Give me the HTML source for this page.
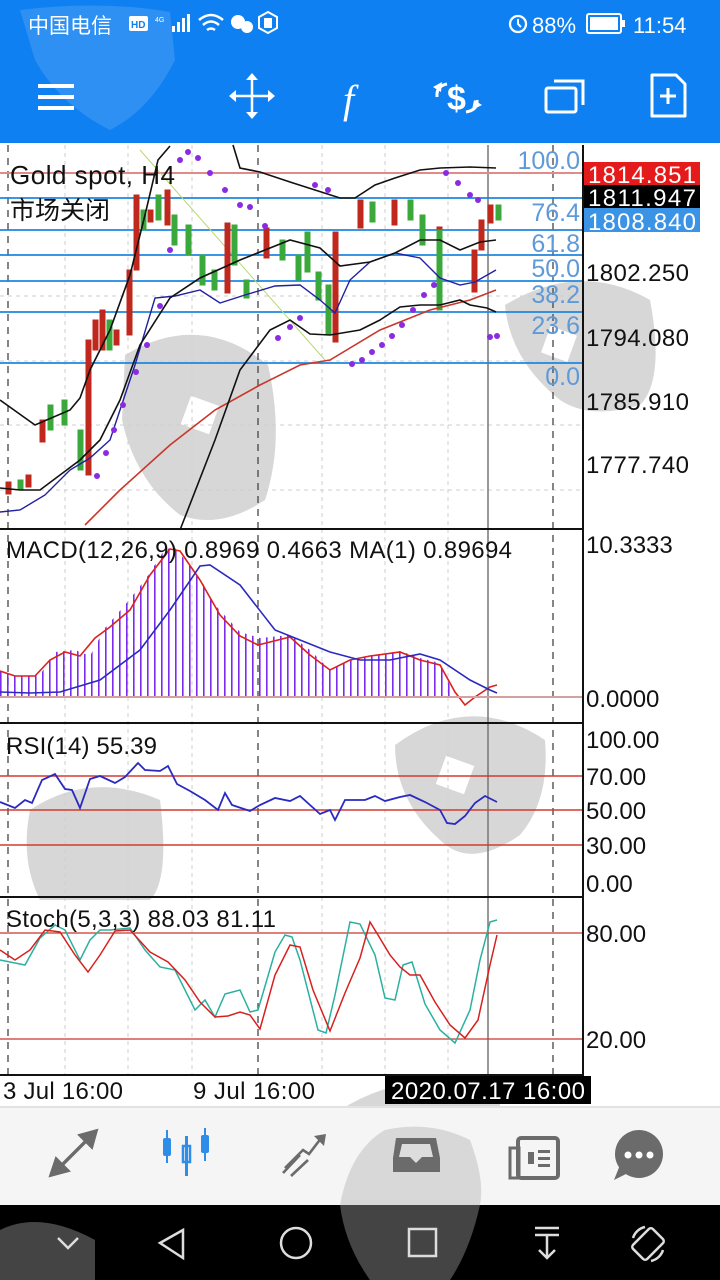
<!DOCTYPE html>
<html><head><meta charset="utf-8"><style>
*{margin:0;padding:0}
body{width:720px;height:1280px;overflow:hidden;background:#fff;font-family:"Liberation Sans","Noto Sans CJK SC",sans-serif;position:relative}
.top{position:absolute;left:0;top:0;width:720px;height:143px;background:#0f80f2}
</style></head><body>
<div class="top"></div>
<svg width="720" height="1280" style="position:absolute;left:0;top:0" xmlns="http://www.w3.org/2000/svg">
<defs>
<pattern id="hist" width="7" height="10" patternUnits="userSpaceOnUse"><rect x="0" y="0" width="1.6" height="10" fill="#7b2bf0"/></pattern>
</defs>
<path d="M20 10 Q100 0 170 12 L175 60 Q150 110 110 130 Q60 105 35 60 Z" fill="#fff" opacity="0.13"/>
<text x="28" y="33" font-size="21" fill="#fff" font-family="Liberation Sans,Noto Sans CJK SC,sans-serif">中国电信</text>
<rect x="129" y="16" width="19" height="15" rx="2" fill="#fff"/><text x="131" y="28" font-size="10" fill="#0f80f2" font-weight="bold">HD</text>
<text x="155" y="22" font-size="7" fill="#fff">4G</text>
<rect x="172" y="26" width="3" height="6" fill="#fff"/><rect x="177" y="22" width="3" height="10" fill="#fff"/><rect x="182" y="18" width="3" height="14" fill="#fff"/><rect x="187" y="14" width="3" height="18" fill="#fff"/>
<path d="M199 20 Q211 10 223 20 M203 25 Q211 18 219 25 M207 30 Q211 27 215 30" stroke="#fff" stroke-width="2.5" fill="none"/>
<circle cx="238" cy="22" r="7" fill="#fff"/><circle cx="247" cy="27" r="6" fill="#fff"/>
<path d="M268 12 L277 17 L277 28 L268 33 L259 28 L259 17 Z" stroke="#fff" stroke-width="2" fill="none"/><rect x="264" y="18" width="8" height="10" fill="#fff"/>
<circle cx="518" cy="24" r="8" stroke="#fff" stroke-width="2.3" fill="none"/><path d="M518 19 V24 L521 27" stroke="#fff" stroke-width="2" fill="none"/>
<text x="532" y="33" font-size="22" fill="#fff">88%</text>
<rect x="587" y="14" width="34" height="19" rx="2" stroke="#fff" stroke-width="2" fill="none"/><rect x="590" y="17" width="28" height="13" fill="#fff"/><rect x="622" y="20" width="3" height="7" fill="#fff"/>
<text x="633" y="33" font-size="22" fill="#fff">11:54</text>
<rect x="38" y="84" width="36" height="4" fill="#fff"/><rect x="38" y="95" width="36" height="4" fill="#fff"/><rect x="38" y="106" width="36" height="4" fill="#fff"/>
<path d="M231 96 H273 M252 75 V117" stroke="#fff" stroke-width="2.5"/>
<path d="M229 96 L236 90 V102 Z M275 96 L268 90 V102 Z M252 73 L246 80 H258 Z M252 119 L246 112 H258 Z" fill="#fff"/>
<text x="343" y="113" font-size="40" font-style="italic" fill="#fff" font-family="Liberation Serif,serif">f</text>
<text x="447" y="110" font-size="34" fill="#fff" font-weight="bold">$</text>
<path d="M447 84 Q436 86 437 97 M477 100 Q478 110 466 112" stroke="#fff" stroke-width="3" fill="none"/>
<path d="M433 87 L442 82 L441 92 Z M482 105 L474 100 L472 110 Z" fill="#fff"/>
<rect x="546" y="88" width="30" height="24" rx="2" stroke="#fff" stroke-width="3" fill="none"/><path d="M554 81 H583 V105" stroke="#fff" stroke-width="3" fill="none"/>
<path d="M652 75 H676 L685 84 V116 H652 Z" stroke="#fff" stroke-width="3" fill="none" stroke-linejoin="round"/><path d="M668 88 V104 M660 96 H676" stroke="#fff" stroke-width="3"/>

<g fill="#9a9a9a" opacity="0.4">
<path d="M125 355 Q200 310 268 365 Q285 440 265 500 Q220 530 180 515 Q135 480 122 420 Z"/>
<path d="M505 305 Q580 260 650 300 Q665 380 640 405 Q590 420 560 400 Q510 360 505 305 Z"/>
<path d="M395 745 Q470 690 545 740 Q550 800 520 835 Q470 870 440 840 Q395 800 395 745 Z"/>
<path d="M30 810 Q90 770 160 800 Q170 880 150 900 L40 900 Q20 860 30 810 Z"/>
<path d="M340 1110 Q420 1060 500 1100 Q500 1200 470 1280 L370 1280 Q335 1200 340 1110 Z"/>
</g>
<g fill="#fff">
<rect x="185" y="400" width="30" height="30" transform="rotate(20 200 415)"/>
<rect x="545" y="330" width="28" height="28" transform="rotate(20 559 344)"/>
<rect x="440" y="760" width="30" height="30" transform="rotate(20 455 775)"/>
</g>

<g stroke="#cfcfcf" stroke-dasharray="4 4" stroke-width="1">
<line x1="65" y1="145" x2="65" y2="1075"/><line x1="128" y1="145" x2="128" y2="1075"/><line x1="192" y1="145" x2="192" y2="1075"/><line x1="322" y1="145" x2="322" y2="1075"/><line x1="385" y1="145" x2="385" y2="1075"/><line x1="448" y1="145" x2="448" y2="1075"/>
<line x1="0" y1="230" x2="582" y2="230"/><line x1="0" y1="296" x2="582" y2="296"/><line x1="0" y1="361" x2="582" y2="361"/><line x1="0" y1="425" x2="582" y2="425"/><line x1="0" y1="490" x2="582" y2="490"/>
</g>
<g stroke="#444" stroke-dasharray="7 6" stroke-width="1.3">
<line x1="8" y1="145" x2="8" y2="1075"/><line x1="258" y1="145" x2="258" y2="1075"/><line x1="553" y1="145" x2="553" y2="1075"/>
</g>
<line x1="488" y1="145" x2="488" y2="1075" stroke="#777" stroke-width="1.5"/>

<line x1="0" y1="173" x2="582" y2="173" stroke="#e08a8a" stroke-width="2"/>
<g stroke="#1e86e0" stroke-width="1.8">
<line x1="0" y1="198" x2="582" y2="198"/><line x1="0" y1="230" x2="582" y2="230"/><line x1="0" y1="255" x2="582" y2="255"/><line x1="0" y1="281" x2="582" y2="281"/><line x1="0" y1="312" x2="582" y2="312"/><line x1="0" y1="363" x2="582" y2="363"/>
</g>
<line x1="140" y1="150" x2="325" y2="360" stroke="#b8d878" stroke-width="1"/>
<g stroke-width="1">
<g stroke="#c0281e" fill="#c0281e">
<rect x="6" y="482" width="5" height="12"/><rect x="26" y="475" width="5" height="12"/><rect x="40" y="420" width="5" height="22"/><rect x="86" y="340" width="5" height="135"/><rect x="93" y="320" width="5" height="30"/><rect x="100" y="310" width="5" height="40"/><rect x="114" y="330" width="5" height="15"/><rect x="127" y="270" width="5" height="65"/><rect x="134" y="195" width="5" height="75"/><rect x="148" y="210" width="5" height="12"/><rect x="165" y="190" width="5" height="35"/><rect x="225" y="223" width="5" height="70"/><rect x="264" y="228" width="5" height="30"/><rect x="333" y="232" width="5" height="110"/><rect x="358" y="200" width="5" height="28"/><rect x="392" y="200" width="5" height="25"/><rect x="437" y="227" width="5" height="23"/><rect x="472" y="250" width="5" height="42"/><rect x="479" y="220" width="5" height="30"/><rect x="488" y="205" width="5" height="18"/>
</g>
<g stroke="#3aa83a" fill="#3aa83a">
<rect x="18" y="480" width="5" height="10"/><rect x="48" y="405" width="5" height="25"/><rect x="62" y="400" width="5" height="25"/><rect x="78" y="430" width="5" height="40"/><rect x="107" y="320" width="5" height="30"/><rect x="141" y="210" width="5" height="20"/><rect x="156" y="195" width="5" height="25"/><rect x="172" y="215" width="5" height="30"/><rect x="186" y="225" width="5" height="30"/><rect x="200" y="255" width="5" height="30"/><rect x="212" y="270" width="5" height="20"/><rect x="232" y="225" width="5" height="40"/><rect x="244" y="280" width="5" height="18"/><rect x="280" y="240" width="5" height="20"/><rect x="296" y="255" width="5" height="25"/><rect x="305" y="232" width="5" height="40"/><rect x="316" y="272" width="5" height="28"/><rect x="326" y="285" width="5" height="50"/><rect x="370" y="202" width="5" height="20"/><rect x="408" y="200" width="5" height="20"/><rect x="420" y="215" width="5" height="30"/><rect x="437" y="230" width="5" height="80"/><rect x="496" y="205" width="5" height="15"/>
</g>
</g>
<polyline fill="none" stroke="#c8372c" stroke-width="1.6" points="85,525 120,490 170,445 215,410 260,385 300,365 330,360 380,330 430,310 470,300 496,290"/>
<polyline fill="none" stroke="#2020a0" stroke-width="1.4" points="0,512 20,510 45,495 70,470 90,458 110,440 135,365 155,298 175,296 200,290 220,303 245,295 275,286 300,285 320,300 335,313 350,280 370,262 395,253 420,258 440,278 460,285 475,282 496,270"/>
<polyline fill="none" stroke="#111" stroke-width="1.6" points="0,400 35,425 70,410 80,398 90,370 110,330 130,275 145,215 158,160 170,146"/>
<polyline fill="none" stroke="#111" stroke-width="1.6" points="0,488 20,490 40,490 60,475 80,460 100,440 120,400 140,345 170,298 200,278 240,260 270,248 290,240 320,248 340,266 370,262 395,253 420,240 440,240 460,250 480,242 496,240"/>
<polyline fill="none" stroke="#111" stroke-width="1.6" points="180,530 215,440 240,370 270,330 290,320 310,334 330,335 360,330 380,320 400,307 420,305 440,305 460,300 470,305 487,308 496,312"/>
<polyline fill="none" stroke="#111" stroke-width="1.6" points="233,145 240,168 260,172 290,182 315,190 340,198 355,198 375,185 395,178 420,170 440,168 470,167 496,168"/>
<g fill="#8a2be2">
<circle cx="97" cy="476" r="3"/><circle cx="106" cy="453" r="3"/><circle cx="114" cy="430" r="3"/><circle cx="123" cy="405" r="3"/><circle cx="136" cy="372" r="3"/><circle cx="147" cy="345" r="3"/><circle cx="160" cy="306" r="3"/><circle cx="170" cy="250" r="3"/><circle cx="180" cy="160" r="3"/><circle cx="188" cy="152" r="3"/><circle cx="198" cy="158" r="3"/><circle cx="210" cy="173" r="3"/><circle cx="225" cy="190" r="3"/><circle cx="240" cy="205" r="3"/><circle cx="250" cy="207" r="3"/><circle cx="265" cy="226" r="3"/><circle cx="278" cy="338" r="3"/><circle cx="290" cy="327" r="3"/><circle cx="300" cy="318" r="3"/><circle cx="315" cy="185" r="3"/><circle cx="328" cy="190" r="3"/><circle cx="352" cy="364" r="3"/><circle cx="362" cy="360" r="3"/><circle cx="372" cy="352" r="3"/><circle cx="382" cy="345" r="3"/><circle cx="392" cy="336" r="3"/><circle cx="402" cy="325" r="3"/><circle cx="413" cy="310" r="3"/><circle cx="424" cy="295" r="3"/><circle cx="434" cy="285" r="3"/><circle cx="446" cy="173" r="3"/><circle cx="458" cy="183" r="3"/><circle cx="470" cy="195" r="3"/><circle cx="478" cy="200" r="3"/><circle cx="490" cy="337" r="3"/><circle cx="497" cy="336" r="3"/>
</g>
<text x="10" y="184" font-size="26" fill="#111" textLength="165">Gold spot, H4</text>
<text x="10" y="219" font-size="25" fill="#111" font-family="Liberation Sans,Noto Sans CJK SC,sans-serif">市场关闭</text>
<g font-size="25" fill="#5f9ad8" text-anchor="end">
<text x="580" y="169">100.0</text><text x="580" y="221">76.4</text><text x="580" y="252">61.8</text><text x="580" y="277">50.0</text><text x="580" y="303">38.2</text><text x="580" y="334">23.6</text><text x="580" y="385">0.0</text>
</g>

<polygon fill="url(#hist)" points="0,697 0,671 15,676 40,675 55,652 75,650 90,656 105,628 125,605 145,580 165,549 175,548 200,578 215,605 240,632 260,638 290,635 310,650 330,670 350,660 370,656 400,651 420,658 440,663 455,697"/>
<polyline fill="none" stroke="#dd2020" stroke-width="1.6" points="0,671 15,676 35,676 50,660 65,652 80,656 95,638 110,627 130,610 150,575 170,549 180,551 200,580 220,615 240,636 258,645 290,637 310,655 330,670 350,660 370,656 400,652 420,660 440,665 455,692 465,705 475,697 490,687 497,685"/>
<polyline fill="none" stroke="#2a2ac0" stroke-width="1.6" points="0,692 30,693 60,692 100,680 140,650 170,610 200,566 210,565 240,585 275,630 300,640 330,652 360,660 390,660 420,654 440,660 470,680 490,690 497,693"/>
<line x1="0" y1="697" x2="582" y2="697" stroke="#d6a0a0" stroke-width="2"/>
<text x="6" y="558" font-size="24" fill="#111" textLength="506">MACD(12,26,9) 0.8969 0.4663 MA(1) 0.89694</text>

<g stroke="#d33a30" stroke-width="1.4"><line x1="0" y1="776" x2="582" y2="776"/><line x1="0" y1="810" x2="582" y2="810"/><line x1="0" y1="845" x2="582" y2="845"/></g>
<polyline fill="none" stroke="#2a2ac0" stroke-width="1.8" points="0,802 15,808 25,800 32,803 42,780 55,774 65,789 72,790 80,808 90,779 100,776 115,783 125,777 138,763 145,770 160,771 168,766 177,784 190,791 205,800 218,810 225,793 232,805 250,811 260,805 275,798 290,801 300,796 310,805 320,814 330,810 335,820 345,800 365,800 375,796 385,801 400,797 410,795 425,802 440,810 447,823 455,824 465,816 475,803 485,796 497,802"/>
<text x="6" y="754" font-size="24" fill="#111" textLength="151">RSI(14) 55.39</text>

<g stroke="#c8372c" stroke-width="1.2"><line x1="0" y1="933" x2="582" y2="933"/><line x1="0" y1="1039" x2="582" y2="1039"/></g>
<polyline fill="none" stroke="#2bb0a0" stroke-width="1.5" points="0,960 10,962 25,965 40,938 55,925 65,930 80,960 90,940 100,930 110,930 130,928 145,950 160,967 175,970 195,1010 205,1000 215,1017 225,994 240,990 250,1012 258,1010 275,952 285,935 292,937 300,960 318,1030 326,1033 335,995 350,922 360,924 375,955 385,998 395,1000 403,965 412,962 425,1004 440,1030 455,1043 470,1010 480,960 490,922 497,920"/>
<polyline fill="none" stroke="#d82020" stroke-width="1.5" points="0,950 15,960 30,950 45,930 60,932 75,955 88,972 100,955 115,931 130,930 150,952 168,962 185,980 200,1002 215,1017 228,1016 240,1012 250,1015 260,1029 275,975 290,945 300,947 313,990 330,1031 345,993 360,958 370,922 378,935 390,955 400,967 410,975 420,975 435,1002 450,1025 465,1038 478,1020 490,965 497,935"/>
<text x="6" y="927" font-size="24" fill="#111" textLength="270">Stoch(5,3,3) 88.03 81.11</text>

<g stroke="#111" stroke-width="2">
<line x1="0" y1="529" x2="584" y2="529"/><line x1="0" y1="723" x2="584" y2="723"/><line x1="0" y1="897" x2="584" y2="897"/><line x1="0" y1="1075" x2="584" y2="1075"/>
<line x1="583" y1="145" x2="583" y2="1075"/>
</g>
<rect x="584" y="162" width="116" height="23" fill="#e51b1b"/><rect x="584" y="185" width="116" height="23" fill="#000"/><rect x="584" y="208" width="116" height="24" fill="#3b93e6"/>
<g font-size="24" fill="#fff"><text x="588" y="183" textLength="108">1814.851</text><text x="588" y="206" textLength="108">1811.947</text><text x="588" y="230" textLength="108">1808.840</text></g>
<g font-size="24" fill="#111">
<text x="586" y="281" textLength="103">1802.250</text><text x="586" y="346" textLength="103">1794.080</text><text x="586" y="410" textLength="103">1785.910</text><text x="586" y="473" textLength="103">1777.740</text>
<text x="586" y="553">10.3333</text><text x="586" y="707">0.0000</text>
<text x="586" y="748">100.00</text><text x="586" y="785">70.00</text><text x="586" y="819">50.00</text><text x="586" y="854">30.00</text><text x="586" y="892">0.00</text>
<text x="586" y="942">80.00</text><text x="586" y="1048">20.00</text>
<text x="3" y="1099" textLength="120">3 Jul 16:00</text><text x="193" y="1099" textLength="122">9 Jul 16:00</text>
</g>
<rect x="385" y="1076" width="206" height="28" fill="#000"/><text x="391" y="1099" font-size="24" fill="#fff" textLength="194">2020.07.17 16:00</text>

<rect x="0" y="1107" width="720" height="98" fill="#f5f5f5"/>
<line x1="0" y1="1107" x2="720" y2="1107" stroke="#e2e2e2" stroke-width="2"/>
<path d="M340 1205 Q350 1150 385 1130 Q430 1120 470 1140 Q485 1180 480 1205 Z" fill="#bbb" opacity="0.5"/>
<g fill="#6b6b6b">
<path d="M50 1176 L56 1158 L62 1164 L85 1141 L79 1135 L97 1130 L92 1148 L86 1142 L63 1165 L69 1171 Z" stroke="#6b6b6b" stroke-width="2"/>
<path d="M283 1173 L300 1155 M285 1168 L303 1150 L309 1154 L322 1137 M291 1176 L308 1160" stroke="#6b6b6b" stroke-width="2.6" fill="none"/><path d="M314 1136 L326 1134 L324 1146 Z"/>
<path d="M396 1138 H436 L440 1158 V1172 H393 V1158 Z"/><path d="M402 1144 H430 L433 1157 H422 L416 1163 L410 1157 H399 Z" fill="#ddd"/>
<rect x="518" y="1138" width="40" height="40" rx="3" fill="none" stroke="#6b6b6b" stroke-width="4"/><rect x="510" y="1148" width="9" height="30" fill="none" stroke="#6b6b6b" stroke-width="3"/><rect x="528" y="1152" width="6" height="12"/><rect x="538" y="1150" width="12" height="3"/><rect x="538" y="1157" width="12" height="3"/><rect x="538" y="1164" width="12" height="3"/>
<circle cx="639" cy="1154" r="24"/><path d="M620 1165 L614 1180 L630 1172 Z"/>
</g>
<g fill="#fff"><circle cx="628" cy="1155" r="3.5"/><circle cx="639" cy="1155" r="3.5"/><circle cx="650" cy="1155" r="3.5"/></g>
<g fill="#2f8de8">
<rect x="163" y="1138" width="8" height="18" rx="2"/><rect x="166" y="1130" width="2" height="33"/>
<rect x="183" y="1146" width="7" height="16" fill="none" stroke="#2f8de8" stroke-width="2.5"/><rect x="185" y="1136" width="3" height="40"/>
<rect x="201" y="1135" width="8" height="18" rx="2"/><rect x="204" y="1128" width="2" height="33"/>
</g>
<rect x="0" y="1205" width="720" height="75" fill="#000"/>
<path d="M0 1230 Q40 1210 95 1240 L95 1280 L0 1280 Z M340 1205 L480 1205 Q470 1250 450 1280 L370 1280 Q345 1245 340 1205 Z" fill="#555" opacity="0.8"/>
<g stroke="#ddd" stroke-width="2.5" fill="none">
<path d="M58 1238 L68 1248 L78 1238"/>
<path d="M183 1230 L160 1243 L183 1258 Z"/>
<circle cx="296" cy="1243" r="15"/>
<rect x="409" y="1229" width="27" height="27"/>
<path d="M535 1228 H559 M535 1235 H559 M547 1235 V1258 M539 1250 L547 1258 L555 1250"/>
<rect x="638" y="1230" width="20" height="28" rx="3" transform="rotate(45 648 1244)"/>
<path d="M633 1238 A16 16 0 0 1 645 1227 M663 1250 A16 16 0 0 1 651 1261"/>
</g>
</svg>
</body></html>
